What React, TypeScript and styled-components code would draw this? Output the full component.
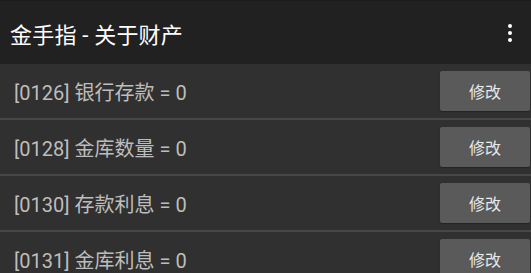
import styled, { createGlobalStyle } from "styled-components";

const GlobalStyle = createGlobalStyle`
  html, body {
    margin: 0;
    padding: 0;
    background: #303030;
  }
  body {
    font-family: Roboto, "Noto Sans CJK SC", sans-serif;
    overflow: hidden;
  }
`;

interface Item {
  id: string;
  name: string;
  value: number;
}

const items: Item[] = [
  { id: "0126", name: "银行存款", value: 0 },
  { id: "0128", name: "金库数量", value: 0 },
  { id: "0130", name: "存款利息", value: 0 },
  { id: "0131", name: "金库利息", value: 0 },
];

const App = () => {
  return (
    <Screen>
      <GlobalStyle />
      <Toolbar>
        <Title>金手指 - 关于财产</Title>
        <MenuButton aria-label="more">
          <span />
          <span />
          <span />
        </MenuButton>
      </Toolbar>
      <List>
        {items.map((item) => (
          <Row key={item.id}>
            <Label>
              [{item.id}] {item.name} = {item.value}
            </Label>
            <EditButton>修改</EditButton>
          </Row>
        ))}
      </List>
    </Screen>
  );
};

export default App;

const Screen = styled.div`
  width: 531px;
  height: 273px;
  overflow: hidden;
  background: #303030;
  display: flex;
  flex-direction: column;
`;

const Toolbar = styled.div`
  height: 64px;
  flex-shrink: 0;
  box-sizing: border-box;
  border-top: 1px solid #1b1b1b;
  background: #212121;
  display: flex;
  align-items: center;
  justify-content: space-between;
  padding: 0 19px 0 10px;
`;

const Title = styled.div`
  color: #ffffff;
  font-size: 22px;
  letter-spacing: 0.2px;
`;

const MenuButton = styled.div`
  display: flex;
  flex-direction: column;
  gap: 3px;
  margin-top: 1px;

  & span {
    display: block;
    width: 4px;
    height: 4px;
    border-radius: 50%;
    background: #ffffff;
  }
`;

const List = styled.div`
  display: flex;
  flex-direction: column;
`;

const Row = styled.div`
  height: 54px;
  flex-shrink: 0;
  display: flex;
  align-items: center;
  justify-content: space-between;
  padding: 0 1px 0 14px;
  border-bottom: 2px solid #474747;
`;

const Label = styled.div`
  color: #bdbdbd;
  font-size: 20px;
`;

const EditButton = styled.button`
  width: 90px;
  height: 40px;
  border: none;
  border-radius: 2px;
  background: #5a5a5a;
  color: #e8e8e8;
  font-family: Roboto, "Noto Sans CJK SC", sans-serif;
  font-size: 16px;
  padding: 0;
  box-shadow: 0 1px 1px rgba(0, 0, 0, 0.25);
`;
